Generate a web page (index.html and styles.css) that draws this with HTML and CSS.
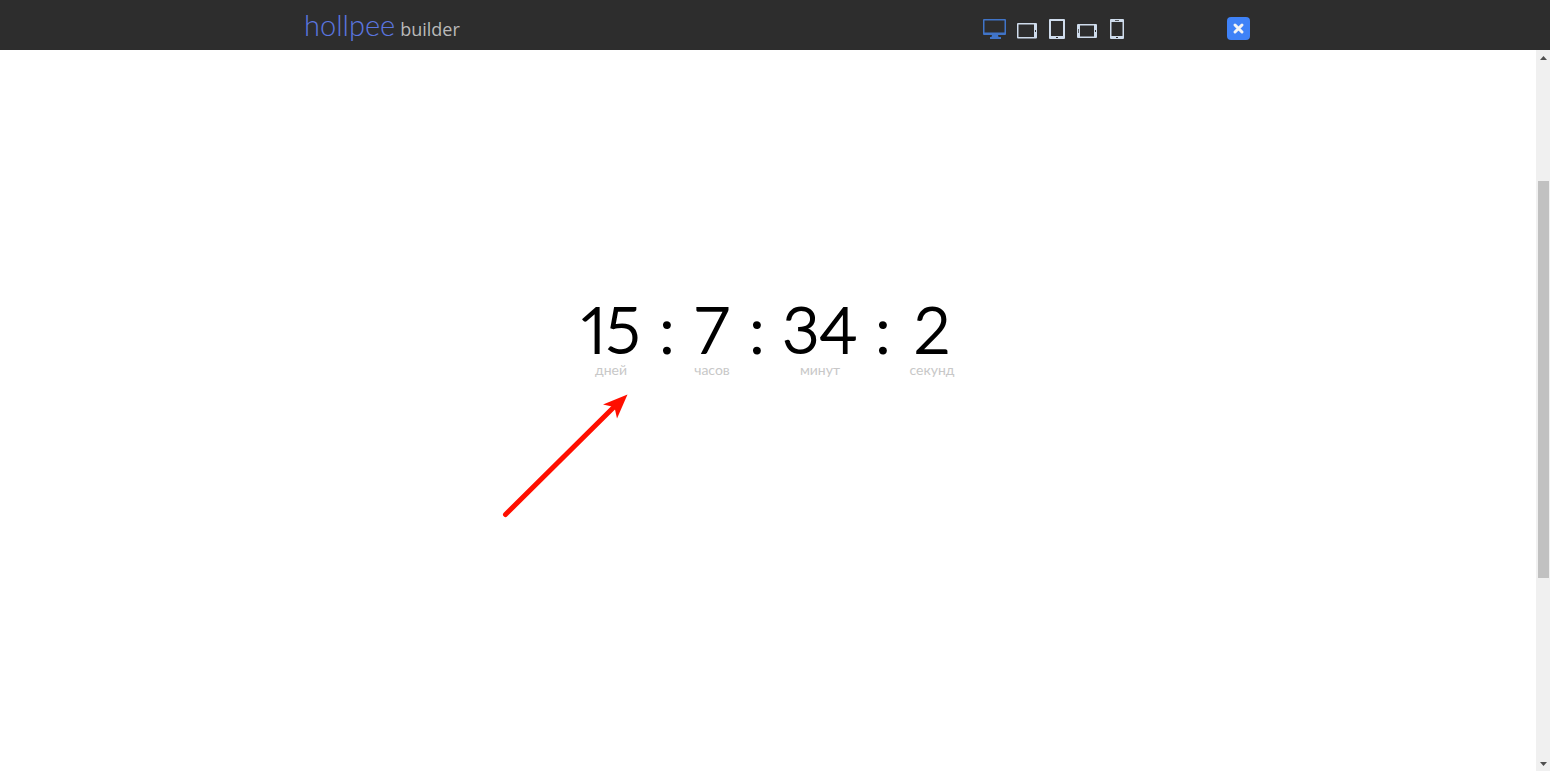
FILE: index.html
```html
<!DOCTYPE html>
<html lang="ru">
<head>
<meta charset="utf-8">
<title>hollpee builder</title>
<link rel="stylesheet" href="styles.css">
</head>
<body>
<header class="topbar">
  <a class="logo" href="#"><span class="logo-name">hollpee</span><span class="logo-sub">builder</span></a>
  <nav class="devices" aria-label="Устройства">
    <button class="device active" type="button" aria-label="Компьютер">
      <svg width="23" height="20" viewBox="0 0 23 20"><path fill="currentColor" fill-rule="evenodd" d="M1 0h21q1 0 1 1v14q0 1-1 1h-7l.5 2H18v2H7v-2h1.500l.5-2H1q-1 0-1-1V1q0-1 1-1zM1.500 1.500v12h20v-12z"/></svg>
    </button>
    <button class="device" type="button" aria-label="Планшет горизонтально">
      <svg width="21" height="20" viewBox="0 0 21 20"><path fill="currentColor" fill-rule="evenodd" d="M1 4h18q1 0 1 1v13.500q0 1-1 1H1q-1 0-1-1V5q0-1 1-1zM1.500 5.500V18H17V5.500zM18 11v2h1v-2z"/></svg>
    </button>
    <button class="device" type="button" aria-label="Планшет вертикально">
      <svg width="17" height="20" viewBox="0 0 17 20"><path fill="currentColor" fill-rule="evenodd" d="M1 0h14q1 0 1 1v18q0 1-1 1H1q-1 0-1-1V1q0-1 1-1zM2 2v15h12V2zM7 18v1h2v-1z"/></svg>
    </button>
    <button class="device" type="button" aria-label="Телефон горизонтально">
      <svg width="22" height="20" viewBox="0 0 22 20"><path fill="currentColor" fill-rule="evenodd" d="M1 5h18q1 0 1 1v12q0 1-1 1H1q-1 0-1-1V6q0-1 1-1zM3 6.500v11h14v-11zM1 10v4h.7v-4zM18 11v2h1v-2z"/></svg>
    </button>
    <button class="device" type="button" aria-label="Телефон вертикально">
      <svg width="14" height="20" viewBox="0 0 14 20"><path fill="currentColor" fill-rule="evenodd" d="M1 0h12q1 0 1 1v18q0 1-1 1H1q-1 0-1-1V1q0-1 1-1zM1.500 3v14h11V3zM5 1v.7h4V1zM6 18v1h2v-1z"/></svg>
    </button>
  </nav>
  <button class="close" type="button" aria-label="Закрыть">
    <svg width="23" height="23" viewBox="0 0 23 23"><path d="M8 8l7 7M15 8l-7 7" stroke="#f4f4f4" stroke-width="3" stroke-linecap="round"/></svg>
  </button>
</header>
<div class="workspace">
  <main class="preview">
    <div class="countdown">
      <div class="unit"><span class="value">15</span><span class="label">дней</span></div>
      <span class="value">:</span>
      <div class="unit"><span class="value">7</span><span class="label">часов</span></div>
      <span class="value">:</span>
      <div class="unit"><span class="value">34</span><span class="label">минут</span></div>
      <span class="value">:</span>
      <div class="unit"><span class="value">2</span><span class="label">секунд</span></div>
      <svg class="pointer" width="130" height="130" viewBox="0 0 130 130"><path d="M5.500 124.500L116 15" stroke="#ff0f00" stroke-width="5" stroke-linecap="round"/><path d="M127.500 4.500L103 14.500l9 2 3 3 2 9z" fill="#ff0f00"/></svg>
    </div>
  </main>
  <div class="scrollbar" aria-hidden="true">
    <svg class="scroll-arrow" width="14" height="15" viewBox="0 0 14 15"><path d="M4 10h7L7.500 6z" fill="#505050"/></svg>
    <div class="track"><div class="thumb"></div></div>
    <svg class="scroll-arrow" width="14" height="15" viewBox="0 0 14 15"><path d="M4 6h7L7.500 10z" fill="#505050"/></svg>
  </div>
</div>
</body>
</html>
```
FILE: styles.css
```css
* { box-sizing: border-box; }
body {
  margin: 0;
  min-height: 100vh;
  display: flex;
  flex-direction: column;
  background: #fff;
  font-family: Lato, "Open Sans", sans-serif;
}
button {
  display: block;
  border: 0;
  padding: 0;
  background: none;
  cursor: pointer;
}
svg { display: block; fill: none; }
.topbar {
  display: flex;
  align-items: center;
  height: 50px;
  padding: 6px 300px 0 304px;
  background: #2d2d2d;
}
.logo {
  display: flex;
  align-items: baseline;
  gap: 5px;
  margin-right: auto;
  padding-bottom: 2px;
  text-decoration: none;
  line-height: 36px;
}
.logo-name { font-size: 29px; font-weight: 300; color: #5b76e0; }
.logo-sub { font-family: "Open Sans", sans-serif; font-size: 18px; color: #b9b9b9; }
.devices { display: flex; gap: 11px; margin-right: 103px; padding-top: 2px; }
.device { color: #cfdcec; }
.device.active { color: #4074c8; }
.close { border-radius: 4px; background: #3f82f7; }
.workspace { flex: 1; display: flex; }
.preview {
  flex: 1;
  display: flex;
  justify-content: center;
  align-items: flex-start;
  padding-top: 246px;
}
.countdown {
  position: relative;
  display: grid;
  grid-template-columns: 60px 52px 38px 52px 74px 52px 46px;
  justify-items: center;
}
.unit { display: flex; flex-direction: column; align-items: center; }
.value {
  font-size: 64px;
  font-weight: 300;
  line-height: 66px;
  color: #000;
  font-variant-numeric: proportional-nums;
  -webkit-text-stroke: 2px #000;
}
.label { font-size: 14px; line-height: 16px; color: #c8c8c8; }
.pointer { position: absolute; left: -81px; top: 94px; }
.scrollbar {
  width: 14px;
  display: flex;
  flex-direction: column;
  background: #f0f0f0;
}
.track { flex: 1; display: grid; grid-template-rows: 116fr 397fr 178fr; padding: 0 1px 0 2px; }
.thumb { grid-row: 2; background: #c1c1c1; }
```
